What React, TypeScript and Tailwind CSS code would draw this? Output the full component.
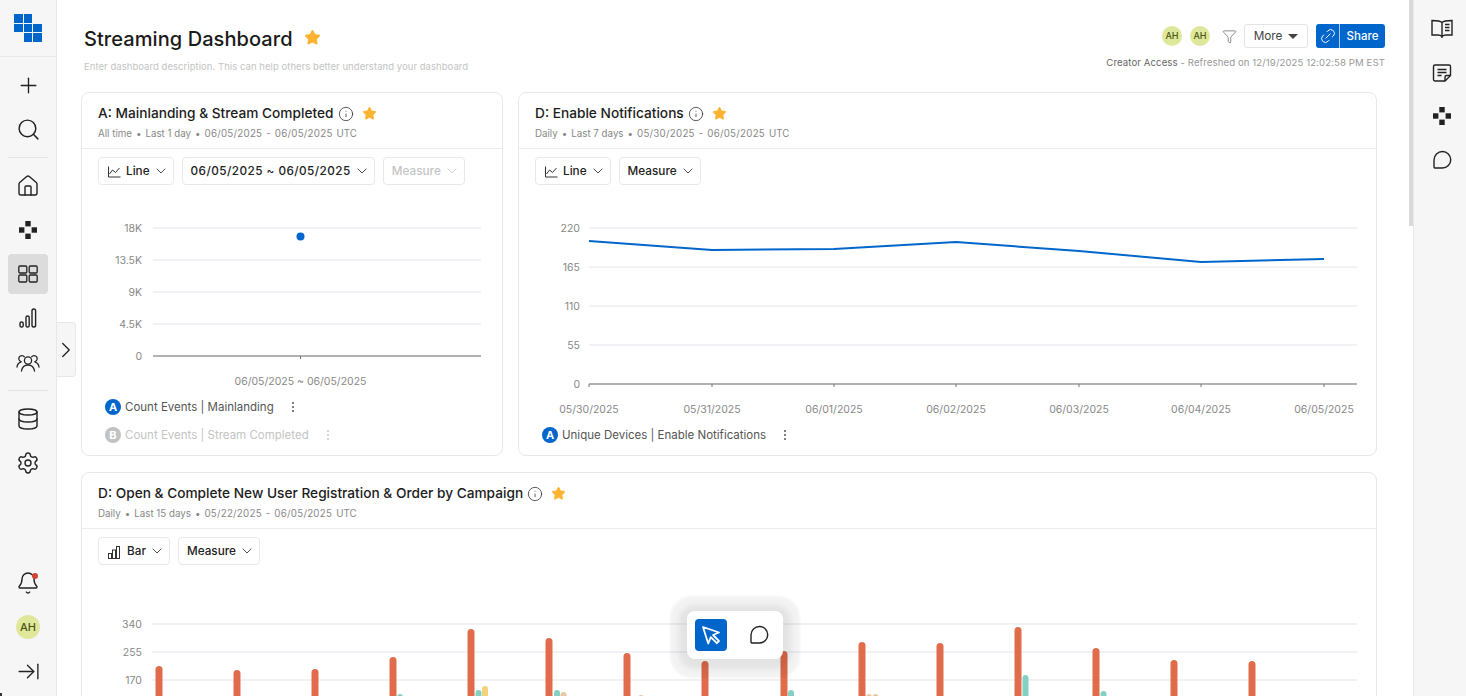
import React from "react";
import { Plus, Search, House, Database, Settings, Bell, ArrowRightToLine, ChevronRight, ChevronDown, Info, Star, Link2, Filter } from "lucide-react";

const ink = "#222";

const Dots = ({ s = 18 }: { s?: number }) => (
  <svg width={s} height={s} viewBox="0 0 18 18" fill={ink}>
    <rect x="6.3" y="0" width="5.4" height="5.4" />
    <rect x="0" y="6.3" width="5.4" height="5.4" />
    <rect x="12.6" y="6.3" width="5.4" height="5.4" />
    <rect x="6.3" y="12.6" width="5.4" height="5.4" />
  </svg>
);
const Panels = () => (
  <svg width="22" height="22" viewBox="0 0 22 22" fill="none" stroke={ink} strokeWidth="1.3">
    <rect x="1.8" y="3" width="8" height="7" rx="1.2" />
    <rect x="12.2" y="3" width="8" height="7" rx="1.2" />
    <rect x="1.8" y="12" width="8" height="7" rx="1.2" />
    <rect x="12.2" y="12" width="8" height="7" rx="1.2" />
  </svg>
);
const Bars = () => (
  <svg width="22" height="22" viewBox="0 0 22 22" fill="none" stroke={ink} strokeWidth="1.4">
    <rect x="3" y="15" width="3.2" height="5" rx="1.6" />
    <rect x="9" y="9" width="3.2" height="11" rx="1.6" />
    <rect x="15" y="2" width="3.6" height="18" rx="1.8" />
  </svg>
);
const People = () => (
  <svg width="24" height="22" viewBox="0 0 24 22" fill="none" stroke={ink} strokeWidth="1.3" strokeLinecap="round">
    <circle cx="12" cy="9.5" r="3.6" />
    <path d="M5.5 20c.6-3.8 3.2-6 6.5-6s5.900 2.200 6.500 6" />
    <path d="M8.400 5.800A3.100 3.100 0 1 0 5 10.600" />
    <path d="M15.600 5.800A3.100 3.100 0 1 1 19 10.600" />
    <path d="M1 16c.3-2.400 1.700-4.200 4-5" />
    <path d="M23 16c-.3-2.400-1.700-4.200-4-5" />
  </svg>
);
const BookIcon = () => (
  <svg width="22" height="20" viewBox="0 0 22 20" fill="none" stroke={ink} strokeWidth="1.4">
    <path d="M11 3.500C9.500 2 7 1.500 1 1.500V16h6c2 0 3 .5 4 1.500 1-1 2-1.500 4-1.500h6V1.500c-6 0-8.500.5-10 2zM11 3.500V19" />
    <path d="M14 5.500h4.500M14 8.500h4.500M14 11.500h4.500" />
  </svg>
);
const NoteIcon = () => (
  <svg width="20" height="20" viewBox="0 0 20 20" fill="none" stroke={ink} strokeWidth="1.4">
    <path d="M13 18H3a1.500 1.500 0 0 1-1.500-1.500v-13A1.500 1.500 0 0 1 3 2h14a1.500 1.500 0 0 1 1.500 1.500V12.500L13 18z" />
    <path d="M13 18v-4a1.500 1.500 0 0 1 1.500-1.500h4" />
    <path d="M5.500 6.500h9M5.500 9.500h9M5.500 12.500h4" />
  </svg>
);
const Bubble = ({ s = 20 }: { s?: number }) => (
  <svg width={s} height={s} viewBox="0 0 20 20" fill="none" stroke={ink} strokeWidth="1.4">
    <path d="M10.500 1.500a8 8 0 0 1 0 16.500H3.200a1.200 1.200 0 0 1-1.200-1.200V10a8.500 8.500 0 0 1 8.500-8.500z" />
  </svg>
);
const Cursor = () => (
  <svg width="20" height="20" viewBox="0 0 20 20" fill="none" stroke="#fff" strokeWidth="1.8" strokeLinejoin="round">
    <path d="M2 2l16 5.500-6 2.500 6 6-2.200 2.200-6-6L7.200 18.500z" />
  </svg>
);
const LineIcon = () => (
  <svg width="13" height="12" viewBox="0 0 13 12" fill="none" stroke="#333" strokeWidth="1" className="ml-[1px]">
    <path d="M.5.500v10.500h12" />
    <path d="M1.500 8l3-4 3 2.500 4-4.500" />
  </svg>
);
const BarIcon = () => (
  <svg width="12" height="13" viewBox="0 0 12 13" fill="none" stroke="#333" strokeWidth="1" className="ml-[1px] mr-[2px]">
    <rect x=".5" y="7.500" width="3" height="5" />
    <rect x="4.500" y="4" width="3" height="8.500" />
    <rect x="8.500" y=".5" width="3" height="12" />
  </svg>
);
const Kebab = ({ light }: { light?: boolean }) => (
  <span className="flex flex-col gap-[2px]">
    {[0, 1, 2].map((i) => (
      <span key={i} className={`w-[2px] h-[2px] rounded-full ${light ? "bg-[#c8c8c8]" : "bg-[#555]"}`} />
    ))}
  </span>
);

const Nav = ({ children, active }: { children: React.ReactNode; active?: boolean }) => (
  <div className={`h-10 w-10 rounded-[4px] flex items-center justify-center ${active ? "bg-[#dcdcdc]" : ""}`}>{children}</div>
);
const Av = ({ small }: { small?: boolean }) => (
  <div className={`rounded-full bg-[#dfe89a] text-[#4a5415] flex items-center justify-center font-medium ${small ? "w-5 h-5 text-[9px]" : "w-6 h-6 text-[11px]"}`}>AH</div>
);
const GoldStar = ({ s = 15 }: { s?: number }) => <Star size={s} fill="#fbb331" stroke="#fbb331" strokeWidth={1.5} strokeLinejoin="round" />;

const Drop = ({ children, disabled, wide }: { children: React.ReactNode; disabled?: boolean; wide?: boolean }) => (
  <div className={`h-7 pl-2 pr-1 flex items-center whitespace-nowrap rounded-[4px] border border-[#e8e8e8] text-[11.75px] font-medium ${wide ? "tracking-[0.45px]" : ""} ${disabled ? "text-[#c4c4c4]" : "text-[#222]"}`}>
    <span className="flex items-center gap-[5px] pt-[2px]">{children}</span>
    <ChevronDown size={16} strokeWidth={1.2} className="ml-[3px]" />
  </div>
);
const Legend = ({ letter, text, off }: { letter: string; text: string; off?: boolean }) => (
  <div className="h-7 pl-[23px] flex items-center">
    <span className={`w-4 h-4 rounded-full text-white text-[11px] font-bold flex items-center justify-center ${off ? "bg-[#c2c2c2]" : "bg-[#0066cc]"}`}>{letter}</span>
    <span className={`ml-1 pt-[2px] text-[11.5px] ${off ? "text-[#c4c4c4]" : "text-[#555]"}`}>{text}</span>
    <span className="ml-[18px]"><Kebab light={off} /></span>
  </div>
);
const CardHead = ({ title, sub }: { title: string; sub: string[] }) => (
  <div className="h-[56px] px-4 pt-[10px] border-b border-[#ececec]">
    <div className="flex items-center h-[21px]">
      <span className="text-[13.7px] font-medium text-[#1c1c1c]">{title}</span>
      <Info size={16} strokeWidth={1.2} className="ml-[4px] text-[#333]" />
      <span className="ml-[8px]"><GoldStar /></span>
    </div>
    <div className="mt-[3px] flex items-center gap-[4px] text-[9.75px] text-[#888]">
      <span>{sub[0]}</span><span>•</span><span>{sub[1]}</span><span>•</span>
      <span className="tracking-[0.25px]">{sub[2]}</span>
      <span>-</span>
      <span className="tracking-[0.25px]">{sub[3]}</span>
      <span>UTC</span>
    </div>
  </div>
);

const axisText = { fontSize: 10.5, fill: "#888", fontFamily: "Inter, sans-serif" };

const Chart1 = () => (
  <svg width="420" height="208" viewBox="82 185 420 208" className="block">
    {[["18K", 228], ["13.5K", 260], ["9K", 292], ["4.5K", 324]].map(([l, y]) => (
      <g key={l as string}>
        <line x1="153" x2="481" y1={y} y2={y} stroke="#eeeef3" strokeWidth="1.5" />
        <text x="142" y={(y as number) + 4} textAnchor="end" style={axisText}>{l}</text>
      </g>
    ))}
    <line x1="153" x2="481" y1="356" y2="356" stroke="#999" strokeWidth="1.5" />
    <line x1="300.500" x2="300.500" y1="356" y2="359" stroke="#777" />
    <text x="142" y="360" textAnchor="end" style={axisText}>0</text>
    <text x="300.500" y="385" textAnchor="middle" style={axisText}>06/05/2025 ~ 06/05/2025</text>
    <circle cx="300.500" cy="236.500" r="4" fill="#0066cc" />
  </svg>
);

const xs2 = [589, 712, 834, 956, 1079, 1201, 1324];
const ys2 = [241, 250, 249, 242, 251, 262, 259];
const dates = ["05/30/2025", "05/31/2025", "06/01/2025", "06/02/2025", "06/03/2025", "06/04/2025", "06/05/2025"];
const Chart2 = () => (
  <svg width="857" height="236" viewBox="519 185 857 236" className="block">
    {[["220", 228], ["165", 267], ["110", 306], ["55", 345]].map(([l, y]) => (
      <g key={l as string}>
        <line x1="589" x2="1357" y1={y} y2={y} stroke="#eeeef3" strokeWidth="1.5" />
        <text x="580" y={(y as number) + 4} textAnchor="end" style={axisText}>{l}</text>
      </g>
    ))}
    <line x1="589" x2="1357" y1="384" y2="384" stroke="#999" strokeWidth="1.5" />
    <text x="580" y="388" textAnchor="end" style={axisText}>0</text>
    {xs2.map((x, i) => (
      <g key={x}>
        <line x1={x} x2={x} y1="384" y2="387" stroke="#777" />
        <text x={x} y="413" textAnchor="middle" style={axisText}>{dates[i]}</text>
      </g>
    ))}
    <polyline points={xs2.map((x, i) => `${x},${ys2[i]}`).join(" ")} fill="none" stroke="#0066cc" strokeWidth="2" />
  </svg>
);

const reds: [number, number][] = [[159, 666], [237, 670], [315, 669], [393, 657], [471, 629], [549, 638], [627, 653], [705, 661], [784, 651], [862, 642], [940, 643], [1018, 627], [1096, 648], [1174, 660], [1252, 661]];
const others: [number, number, string][] = [[400, 694, "#84d0c4"], [478.500, 690, "#84d0c4"], [485, 686, "#f2d27a"], [557, 690, "#84d0c4"], [563.500, 692, "#e8c9a0"], [641, 695, "#e8c9a0"], [791, 690, "#84d0c4"], [869, 694, "#e8c9a0"], [875.500, 694, "#e8c9a0"], [1025.500, 675, "#84d0c4"], [1103.500, 691, "#84d0c4"]];
const Chart3 = () => (
  <svg width="1294" height="160" viewBox="82 565 1294 160" className="block">
    {[["340", 624], ["255", 652], ["170", 680]].map(([l, y]) => (
      <g key={l as string}>
        <line x1="152" x2="1357" y1={y} y2={y} stroke="#eeeef3" strokeWidth="1.5" />
        <text x="142" y={(y as number) + 4} textAnchor="end" style={axisText}>{l}</text>
      </g>
    ))}
    {reds.map(([x, y]) => <rect key={x} x={x - 3.500} y={y} width="7" height="120" rx="3.500" fill="#e06c4c" />)}
    {others.map(([x, y, c]) => <rect key={x} x={x - 3} y={y} width="6" height="60" rx="3" fill={c} />)}
  </svg>
);

export default function App() {
  return (
    <div className="relative flex h-[696px] w-[1466px] overflow-hidden bg-white font-['Inter',sans-serif]">
      <aside className="w-[57px] shrink-0 flex flex-col bg-[#f6f6f6] border-r border-[#e8e8e8]">
        <div className="h-[57px] shrink-0 border-b border-[#e8e8e8] flex items-center justify-center">
          <div className="grid grid-cols-3 gap-[1px] w-[28px] h-[28px]">
            {[1, 1, 0, 1, 1, 1, 0, 1, 1].map((on, i) => (
              <span key={i} className={on ? "bg-[#0066cc]" : ""} />
            ))}
          </div>
        </div>
        <div className="flex-1 flex flex-col items-center gap-1 pt-2 pb-[5px]">
          <Nav><Plus size={25} strokeWidth={1.3} color={ink} /></Nav>
          <Nav><Search size={25} strokeWidth={1.4} color={ink} /></Nav>
          <div className="w-10 my-1 border-t border-[#e4e4e4]" />
          <Nav><House size={24} strokeWidth={1.4} color={ink} /></Nav>
          <Nav><Dots /></Nav>
          <Nav active><Panels /></Nav>
          <Nav><Bars /></Nav>
          <Nav><People /></Nav>
          <div className="w-10 my-1 border-t border-[#e4e4e4]" />
          <Nav><Database size={24} strokeWidth={1.4} color={ink} /></Nav>
          <Nav><Settings size={24} strokeWidth={1.4} color={ink} /></Nav>
          <div className="mt-auto relative">
            <Nav><Bell size={24} strokeWidth={1.4} color={ink} /></Nav>
            <span className="absolute right-[10px] top-[10px] w-[6px] h-[6px] rounded-full bg-[#d0453a]" />
          </div>
          <Nav><Av /></Nav>
          <Nav><ArrowRightToLine size={25} strokeWidth={1.3} color={ink} /></Nav>
        </div>
      </aside>

      <main className="flex-1 min-w-0 overflow-hidden pl-6 pr-6 pt-6">
        <header className="h-[68px] pl-[3px] flex justify-between">
          <div>
            <div className="flex items-center h-[30px]">
              <h1 className="text-[20px] font-medium text-[#1a1a1a] tracking-[0.07px]">Streaming Dashboard</h1>
              <span className="ml-[11px] -mt-[3px]"><GoldStar s={17} /></span>
            </div>
            <p className="mt-[6px] text-[9.5px] text-[#c4c4c4] tracking-[0.05px]">Enter dashboard description. This can help others better understand your dashboard</p>
          </div>
          <div className="flex flex-col items-end">
            <div className="flex items-center h-6">
              <Av small />
              <span className="ml-2"><Av small /></span>
              <Filter size={15} strokeWidth={1.2} className="ml-[12px] text-[#666]" />
              <div className="ml-[7px] h-6 w-16 rounded-[3px] border border-[#e4e4e4] flex items-center justify-center gap-[6px] text-[11.75px] text-[#444]">
                <span className="pt-[2px]">More</span>
                <span className="w-0 h-0 border-x-[5px] border-x-transparent border-t-[5px] border-t-[#444]" />
              </div>
              <div className="ml-2 h-6 w-[69px] rounded-[3px] bg-[#0066cc] flex items-center text-white text-[11.5px] font-medium">
                <span className="w-6 h-6 flex items-center justify-center border-r border-[#a9cdf0]"><Link2 size={18} strokeWidth={1.2} className="-rotate-45" /></span>
                <span className="flex-1 text-center pt-[1px]">Share</span>
              </div>
            </div>
            <p className="mt-[8px] text-[9.6px] text-[#999] tracking-[0.1px] whitespace-nowrap"><span className="text-[#666]">Creator Access</span> - Refreshed on 12/19/2025 12:02:58 PM EST</p>
          </div>
        </header>

        <div className="w-[1296px] grid grid-cols-[422px_859px] gap-x-[15px] gap-y-4">
          <section className="h-[364px] rounded-lg border border-[#e8e8e8]">
            <CardHead title="A: Mainlanding & Stream Completed" sub={["All time", "Last 1 day", "06/05/2025", "06/05/2025"]} />
            <div className="px-4 pt-2 flex gap-2">
              <Drop><LineIcon />Line</Drop>
              <Drop wide>06/05/2025 ~ 06/05/2025</Drop>
              <Drop disabled>Measure</Drop>
            </div>
            <Chart1 />
            <Legend letter="A" text="Count Events | Mainlanding" />
            <Legend letter="B" text="Count Events | Stream Completed" off />
          </section>
          <section className="h-[364px] rounded-lg border border-[#e8e8e8]">
            <CardHead title="D: Enable Notifications" sub={["Daily", "Last 7 days", "05/30/2025", "06/05/2025"]} />
            <div className="px-4 pt-2 flex gap-2">
              <Drop><LineIcon />Line</Drop>
              <Drop>Measure</Drop>
            </div>
            <Chart2 />
            <Legend letter="A" text="Unique Devices | Enable Notifications" />
          </section>
          <section className="col-span-2 h-[400px] rounded-lg border border-[#e8e8e8]">
            <CardHead title="D: Open & Complete New User Registration & Order by Campaign" sub={["Daily", "Last 15 days", "05/22/2025", "06/05/2025"]} />
            <div className="px-4 pt-2 flex gap-2">
              <Drop><BarIcon />Bar</Drop>
              <Drop>Measure</Drop>
            </div>
            <Chart3 />
          </section>
        </div>
      </main>

      <div className="w-[4px] shrink-0 bg-white">
        <div className="w-[4px] h-[226px] bg-[#d9d9d9]" />
      </div>

      <aside className="w-[53px] shrink-0 bg-[#f6f6f6] border-l border-[#e8e8e8] flex flex-col items-center pl-[3px] pt-[9px] gap-[3.500px]">
        <Nav><BookIcon /></Nav>
        <Nav><NoteIcon /></Nav>
        <Nav><Dots /></Nav>
        <Nav><Bubble /></Nav>
      </aside>

      <div className="absolute left-[57px] top-[322px] w-[19px] h-[55px] bg-[#f6f6f6] border border-l-0 border-[#e8e8e8] rounded-r-[4px] flex items-center justify-center">
        <ChevronRight size={26} strokeWidth={1.2} color={ink} className="shrink-0" />
      </div>

      <div className="absolute left-[687px] top-[611px] w-24 h-12 rounded-lg bg-white flex items-center justify-between pl-2 pr-[8px] shadow-[0_2px_5px_8px_rgba(0,0,0,0.06),0_2px_3px_17px_rgba(0,0,0,0.05)]">
        <span className="w-8 h-8 rounded-[4px] bg-[#0066cc] flex items-center justify-center"><Cursor /></span>
        <span className="w-8 h-8 flex items-center justify-center"><Bubble /></span>
      </div>

      <span className="absolute left-0 bottom-0 w-[2px] h-[3px] bg-[#333]" />
    </div>
  );
}
